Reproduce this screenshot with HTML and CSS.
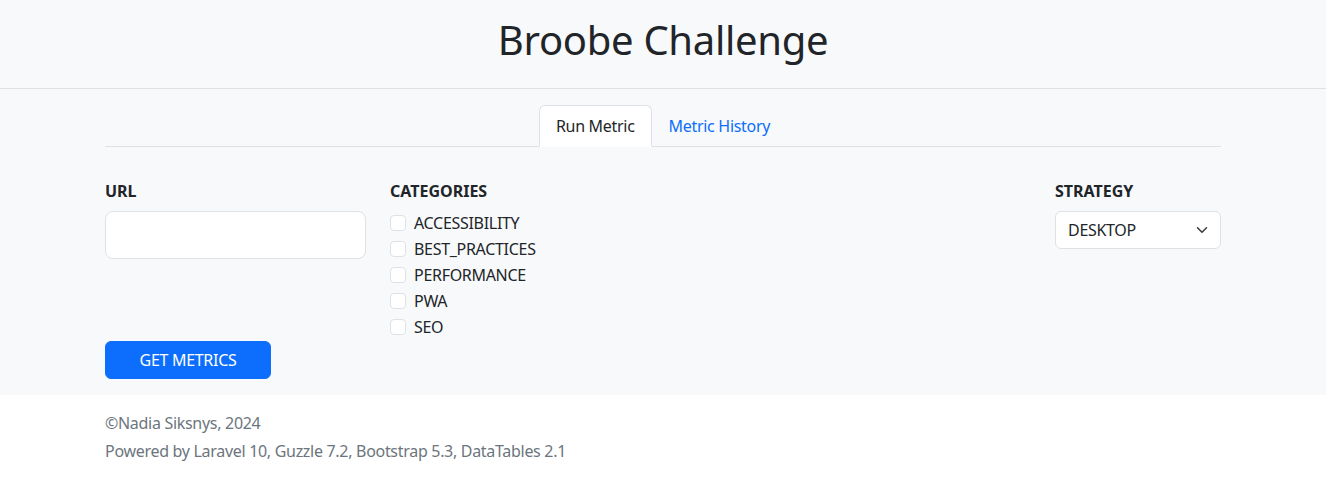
FILE: index.html
```html
<!DOCTYPE html>
<html lang="en">
<head>
<meta charset="utf-8">
<title>Broobe Challenge</title>
<link rel="stylesheet" href="styles.css">
</head>
<body>
<header class="site-header">
  <h1 class="title">Broobe Challenge</h1>
</header>
<main class="main">
  <div class="container">
    <ul class="tabs">
      <li><a class="tab active" href="#">Run Metric</a></li>
      <li><a class="tab" href="#">Metric History</a></li>
    </ul>
    <form class="form">
      <div class="row">
        <div class="col col-url">
          <label class="label" for="url">URL</label>
          <input id="url" class="input-lg" type="text">
        </div>
        <div class="col col-cat">
          <div class="label">CATEGORIES</div>
          <label class="check"><span class="box"></span>ACCESSIBILITY</label>
          <label class="check"><span class="box"></span>BEST_PRACTICES</label>
          <label class="check"><span class="box"></span>PERFORMANCE</label>
          <label class="check"><span class="box"></span>PWA</label>
          <label class="check"><span class="box"></span>SEO</label>
        </div>
        <div class="col col-strategy">
          <div class="label">STRATEGY</div>
          <div class="select">
            <span>DESKTOP</span>
            <svg class="chev" width="16" height="16" viewBox="0 0 16 16"><path d="M2 5l6 6 6-6" fill="none" stroke="#343a40" stroke-linecap="round" stroke-linejoin="round" stroke-width="2"/></svg>
          </div>
        </div>
      </div>
      <div class="row">
        <div class="col col-btn">
          <button type="button" class="btn">GET METRICS</button>
        </div>
      </div>
    </form>
  </div>
</main>
<footer class="footer">
  <div class="container">
    <p class="foot-line">©Nadia Siksnys, 2024</p>
    <p class="foot-line">Powered by Laravel 10, Guzzle 7.2, Bootstrap 5.3, DataTables 2.1</p>
  </div>
</footer>
</body>
</html>
```
FILE: styles.css
```css
* { box-sizing: border-box; }
html, body { margin: 0; padding: 0; }
body {
  font-family: "Noto Sans", "Open Sans", sans-serif;
  font-size: 16px;
  line-height: 24px;
  letter-spacing: -0.3px;
  color: #212529;
  background: #fff;
}
.container {
  width: 1140px;
  margin: 0 auto;
  padding: 0 12px;
}
.site-header {
  background: #f8f9fa;
  border-bottom: 1px solid #dee2e6;
  padding: 16px 0;
  text-align: center;
}
.title {
  margin: 0 0 8px;
  font-size: 40px;
  line-height: 48px;
  font-weight: 400;
}
.main {
  background: #f8f9fa;
  padding: 16px 0;
}
.tabs {
  list-style: none;
  margin: 0;
  padding: 0;
  display: flex;
  justify-content: center;
  border-bottom: 1px solid #dee2e6;
}
.tabs li { margin-bottom: -1px; }
.tab {
  display: block;
  padding: 8px 16px;
  border: 1px solid transparent;
  border-top-left-radius: 6px;
  border-top-right-radius: 6px;
  color: #0d6efd;
  text-decoration: none;
}
.tab.active {
  color: #212529;
  background: #fff;
  border-color: #dee2e6 #dee2e6 #fff;
}
.form { margin-top: 32px; }
.row {
  display: flex;
  margin: 0 -12px;
}
.col { padding: 0 12px; }
.col-url { width: 285px; }
.col-cat { flex: 1; }
.col-strategy { width: 190px; }
.col-btn { width: 190px; }
.label {
  display: block;
  font-weight: 700;
  letter-spacing: 0;
  margin-bottom: 8px;
}
.input-lg {
  display: block;
  width: 100%;
  height: 48px;
  border: 1px solid #dee2e6;
  border-radius: 8px;
  background: #fff;
  font: inherit;
  padding: 8px 16px;
}
.check {
  display: flex;
  align-items: center;
  min-height: 24px;
  margin-bottom: 2px;
  gap: 8px;
}
.box {
  width: 16px;
  height: 16px;
  border: 1px solid #dee2e6;
  border-radius: 4px;
  background: #fff;
  flex: none;
}
.select {
  display: flex;
  align-items: center;
  justify-content: space-between;
  height: 38px;
  padding: 6px 12px;
  background: #fff;
  border: 1px solid #dee2e6;
  border-radius: 6px;
}
.chev { width: 12px; height: 12px; }
.btn {
  display: block;
  width: 100%;
  height: 38px;
  border: 1px solid #0d6efd;
  background: #0d6efd;
  color: #fff;
  border-radius: 6px;
  font: inherit;
  letter-spacing: -0.3px;
  padding: 6px 12px;
}
.footer {
  padding: 16px 0;
  color: #6c757d;
}
.foot-line { margin: 0 0 4px; }
```
